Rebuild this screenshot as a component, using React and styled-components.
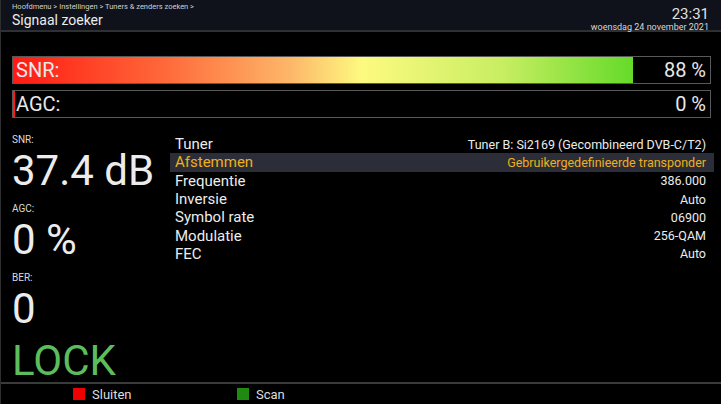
import React from 'react'
import styled, { createGlobalStyle } from 'styled-components'

const Global = createGlobalStyle`
  html, body {
    margin: 0;
    padding: 0;
    background: #000;
  }
  body {
    font-family: Roboto, "Liberation Sans", sans-serif;
  }
`

const Screen = styled.div`
  width: 721px;
  height: 404px;
  box-sizing: border-box;
  border-left: 1px solid #2e2e2e;
  background: #000;
  color: #e6e6e6;
  display: flex;
  flex-direction: column;
  overflow: hidden;
`

const Header = styled.div`
  height: 32px;
  flex-shrink: 0;
  box-sizing: border-box;
  background: #0f121b;
  border-bottom: 2px solid #2e3033;
  display: flex;
  justify-content: space-between;
  padding: 2px 12px 0 11px;
`

const Crumbs = styled.div`
  display: flex;
  flex-direction: column;
`

const Path = styled.div`
  font-size: 7.5px;
  line-height: 10px;
  color: #cfcfcf;
`

const Title = styled.div`
  font-size: 14px;
  line-height: 16px;
  color: #ececec;
`

const Clock = styled.div`
  display: flex;
  flex-direction: column;
  align-items: flex-end;
  padding-top: 4px;
`

const Time = styled.div`
  font-size: 15px;
  line-height: 16px;
  color: #e0e0e0;
`

const Date = styled.div`
  font-size: 9px;
  line-height: 10px;
  color: #d6d6d6;
`

const Meters = styled.div`
  flex-shrink: 0;
  display: flex;
  flex-direction: column;
  gap: 6px;
  padding: 24px 10px 0 11px;
`

const Meter = styled.div`
  position: relative;
  height: 28px;
  box-sizing: border-box;
  border: 1px solid #595959;
  display: flex;
  align-items: center;
  justify-content: space-between;
  padding: 0 4px 0 3px;
  font-size: 20px;
  color: #e8e8e8;
`

/* clip box for the level; the gradient below always spans the full bar */
const Fill = styled.div`
  position: absolute;
  left: 0;
  top: 0;
  bottom: 0;
  overflow: hidden;
`

const Gradient = styled.div`
  width: 698px;
  height: 100%;
  background: linear-gradient(
    to right,
    #ff1a14 0%,
    #ff6a3a 22%,
    #fdb86a 40%,
    #fdfa80 50%,
    #c8ee62 70%,
    #5fd926 90%
  );
`

const MeterText = styled.span`
  position: relative;
`

const Body = styled.div`
  flex: 1;
  min-height: 0;
  display: flex;
  padding: 16px 7px 0 11px;
`

const Readouts = styled.div`
  width: 158px;
  display: flex;
  flex-direction: column;
`

const Readout = styled.div`
  height: 69px;
  display: flex;
  flex-direction: column;
`

const Caption = styled.div`
  font-size: 10px;
  line-height: 12px;
  color: #dcdcdc;
`

const Big = styled.div`
  font-size: 42px;
  line-height: ${p => (p.$lock ? '40px' : '50px')};
  color: ${p => (p.$lock ? '#5cbd5c' : '#ececec')};
  white-space: nowrap;
`

const List = styled.div`
  flex: 1;
  display: flex;
  flex-direction: column;
  padding-top: 1px;
`

const Row = styled.div`
  height: 18.3px;
  display: flex;
  align-items: center;
  justify-content: space-between;
  padding: 0 8px 0 5px;
  background: ${p => (p.$active ? '#2b2e38' : 'transparent')};
  color: ${p => (p.$active ? '#eeb01d' : '#ececec')};
`

const Label = styled.span`
  font-size: 15px;
`

const Value = styled.span`
  font-size: 12.5px;
`

const Footer = styled.div`
  height: 22px;
  flex-shrink: 0;
  box-sizing: border-box;
  border-top: 2px solid #3b3b3b;
  display: flex;
  align-items: center;
  padding-left: 72px;
`

const Key = styled.div`
  display: flex;
  align-items: center;
  gap: 7px;
  width: 164px;
  font-size: 13px;
  color: #dedede;
`

const Swatch = styled.span`
  width: 12px;
  height: 12px;
  background: ${p => p.$color};
`

const rows = [
  ['Tuner', 'Tuner B: Si2169 (Gecombineerd DVB-C/T2)'],
  ['Afstemmen', 'Gebruikergedefinieerde transponder'],
  ['Frequentie', '386.000'],
  ['Inversie', 'Auto'],
  ['Symbol rate', '06900'],
  ['Modulatie', '256-QAM'],
  ['FEC', 'Auto'],
]

const Level = ({ label, value }) => (
  <Meter>
    <Fill style={{ width: value === 0 ? '2px' : `${value + 1}%` }}>
      <Gradient />
    </Fill>
    <MeterText>{label}</MeterText>
    <MeterText>{value} %</MeterText>
  </Meter>
)

const App = () => {
  return (
    <Screen>
      <Global />
      <Header>
        <Crumbs>
          <Path>Hoofdmenu &gt; Instellingen &gt; Tuners &amp; zenders zoeken &gt;</Path>
          <Title>Signaal zoeker</Title>
        </Crumbs>
        <Clock>
          <Time>23:31</Time>
          <Date>woensdag 24 november 2021</Date>
        </Clock>
      </Header>

      <Meters>
        <Level label="SNR:" value={88} />
        <Level label="AGC:" value={0} />
      </Meters>

      <Body>
        <Readouts>
          <Readout>
            <Caption>SNR:</Caption>
            <Big>37.4 dB</Big>
          </Readout>
          <Readout>
            <Caption>AGC:</Caption>
            <Big>0 %</Big>
          </Readout>
          <Readout>
            <Caption>BER:</Caption>
            <Big>0</Big>
          </Readout>
          <Big $lock>LOCK</Big>
        </Readouts>
        <List>
          {rows.map(([k, v], i) => (
            <Row key={k} $active={i === 1}>
              <Label>{k}</Label>
              <Value>{v}</Value>
            </Row>
          ))}
        </List>
      </Body>

      <Footer>
        <Key><Swatch $color="#f00000" />Sluiten</Key>
        <Key><Swatch $color="#1f8a10" />Scan</Key>
      </Footer>
    </Screen>
  )
}

export default App
